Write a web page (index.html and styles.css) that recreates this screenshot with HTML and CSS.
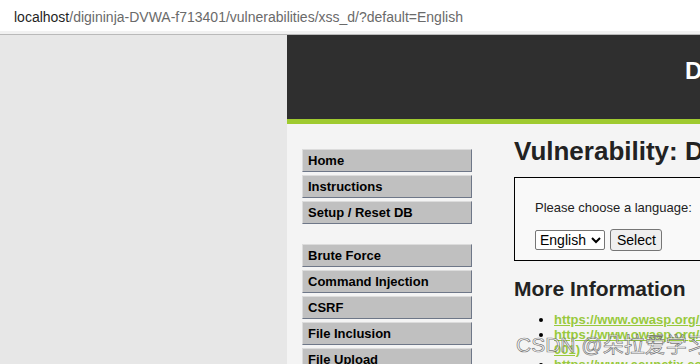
FILE: index.html
```html
<!DOCTYPE html>
<html lang="en">
<head>
    <meta charset="UTF-8">
    <meta name="viewport" content="width=device-width, initial-scale=1.0">
    <title>Vulnerability: DOM Based Cross Site Scripting (XSS)</title>
    <link rel="stylesheet" href="styles.css">
</head>
<body>
    <!-- Browser address bar -->
    <div class="chrome">
        <div class="url"><span class="host">localhost</span>/digininja-DVWA-f713401/vulnerabilities/xss_d/?default=English</div>
    </div>

    <div class="page">
        <div class="header">
            <div class="logo">DVWA</div>
        </div>

        <div class="main">
            <!-- Main menu -->
            <div class="menu">
                <ul class="menu-group">
                    <li><a href="#">Home</a></li>
                    <li><a href="#">Instructions</a></li>
                    <li><a href="#">Setup / Reset DB</a></li>
                </ul>
                <ul class="menu-group">
                    <li><a href="#">Brute Force</a></li>
                    <li><a href="#">Command Injection</a></li>
                    <li><a href="#">CSRF</a></li>
                    <li><a href="#">File Inclusion</a></li>
                    <li><a href="#">File Upload</a></li>
                    <li><a href="#">Insecure CAPTCHA</a></li>
                </ul>
            </div>

            <!-- Page body -->
            <div class="content">
                <h1>Vulnerability: DOM Based Cross Site Scripting (XSS)</h1>
                <div class="code-area">
                    <p>Please choose a language:</p>
                    <form class="lang-form" onsubmit="return false">
                        <select class="lang-select" name="default">
                            <option value="English" selected>English</option>
                            <option value="French">French</option>
                            <option value="Spanish">Spanish</option>
                            <option value="German">German</option>
                        </select>
                        <input type="submit" class="lang-btn" value="Select">
                    </form>
                </div>

                <h2>More Information</h2>
                <ul class="links">
                    <li><a href="#">https://www.owasp.org/index.php/Cross-site_Scripting_(XSS)</a></li>
                    <li><a href="#">https://www.owasp.org/index.php/Testing_for_DOM-based_Cross_site_scripting_(OTG-CLIENT-<wbr>001)</a></li>
                    <li><a href="#">https://www.acunetix.com/blog/articles/dom-xss-explained/</a></li>
                </ul>
            </div>
        </div>
    </div>

    <div class="watermark">CSDN @朵拉爱学习</div>
</body>
</html>
```

FILE: styles.css
```css
* { box-sizing: border-box; }
html, body { height: 364px; }
body {
    margin: 0;
    overflow: hidden;
    background: #e7e7e7;
    font-family: "Liberation Sans", Arial, sans-serif;
    font-size: 13px;
    color: #000;
}

/* Address bar */
.chrome { background: #f1f1f1; padding-bottom: 3px; border-bottom: 1px solid #b9b9b9; }
.url {
    height: 31px;
    padding: 4px 0 0 14px;
    line-height: 27px;
    background: #fff;
    font-size: 14px;
    color: #6a6a6a;
    white-space: nowrap;
}
.url .host { color: #1f1f1f; }

/* Page frame */
.page { margin-left: 287px; width: 975px; height: 400px; background: #f4f4f4; }
.header { height: 89px; background: #2f2f2f; border-bottom: 5px solid #9fca30; padding: 24px 0 0 398px; }
.logo { font-size: 24px; line-height: 24px; font-weight: bold; color: #fff; }

.main { display: flex; gap: 42px; padding: 0 15px; }

/* Menu */
.menu { width: 170px; flex-shrink: 0; padding-top: 25px; }
.menu-group { list-style: none; margin: 0 0 20px; padding: 0; }
.menu-group li a {
    display: block;
    height: 23px;
    margin-bottom: 3px;
    padding-left: 5px;
    line-height: 21px;
    background: #c0c0c0;
    border: 1px solid;
    border-color: #dcdcdc #6e7788 #6e7788 #dcdcdc;
    color: #000;
    font-weight: bold;
    text-decoration: none;
}

/* Content */
.content { width: 640px; flex-shrink: 0; padding-top: 12px; }
h1 { margin: 0 0 10px; font-size: 26px; font-weight: bold; color: #222; white-space: nowrap; }
.code-area { background: #f9f9f9; border: 1px solid #000; padding: 10px 20px 9px; }
.code-area p { margin: 12px 0 14px; color: #222; }
.lang-form { display: flex; align-items: center; gap: 5px; }
.lang-select {
    width: 70px;
    height: 20px;
    font-family: "Liberation Sans", Arial, sans-serif;
    font-size: 14px;
    border: 1px solid #767676;
    border-radius: 2px;
    background: #fff;
    color: #000;
}
.lang-btn {
    width: 52px;
    height: 22px;
    font-family: "Liberation Sans", Arial, sans-serif;
    font-size: 14px;
    border: 1px solid #767676;
    border-radius: 3px;
    background: #efefef;
    color: #000;
}

h2 { margin: 16px 0 11px; font-size: 21px; font-weight: bold; color: #222; }
.links { margin: 0; padding-left: 40px; line-height: 15px; }
.links a { color: #98c93c; font-weight: bold; }

/* CSDN watermark */
.watermark {
    position: absolute;
    left: 516px;
    top: 328px;
    font-family: "Liberation Sans", "Noto Sans CJK SC", sans-serif;
    font-size: 21px;
    color: rgba(255, 255, 255, 0.6);
    -webkit-text-stroke: 0.7px rgba(85, 85, 85, 0.8);
    white-space: nowrap;
}
```
